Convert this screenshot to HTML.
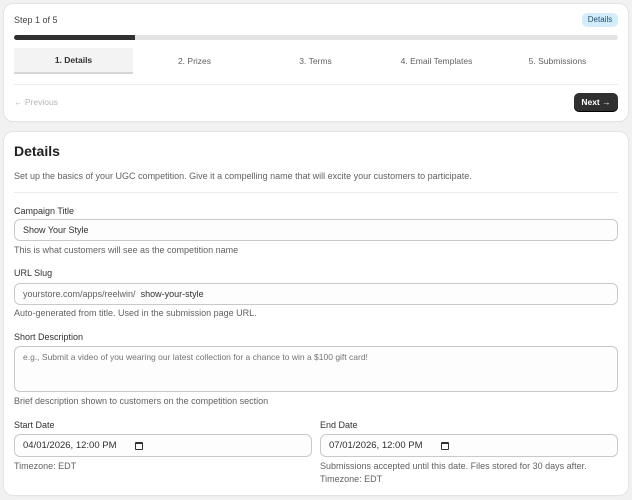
<!DOCTYPE html>
<html><head><style>
*{box-sizing:border-box;margin:0;padding:0}
body{width:632px;height:500px;background:#f1f1f1;font-family:"Liberation Sans",sans-serif;color:#303030;position:relative;overflow:hidden}
.card{position:absolute;left:4px;width:624px;background:#fff;border-radius:9px;box-shadow:0 0 0 1px #e3e3e3,0 1px 1px rgba(0,0,0,.08)}
.a{position:absolute;white-space:nowrap}
.s{font-size:9px;color:#616161}
.l{font-size:9px;color:#303030}
.inp{position:absolute;border:1px solid #c9c9c9;border-radius:6px;background:#fdfdfd;font-size:9px;color:#303030;padding-left:8px;display:flex;align-items:center}
.tab{position:absolute;top:44px;height:26px;width:119px;font-size:8.5px;color:#616161;display:flex;align-items:center;justify-content:center}
</style></head><body>
<div class="card" style="top:4px;height:117px">
  <div class="a s" style="left:10px;top:11px;color:#444">Step 1 of 5</div>
  <div class="a" style="left:578px;top:9px;width:36px;height:14px;background:#d3ecfa;border-radius:5px;font-size:8px;color:#1f4f6e;text-align:center;line-height:14px">Details</div>
  <div class="a" style="left:10px;top:31px;width:604px;height:5px;background:#e3e3e3;border-radius:3px"></div>
  <div class="a" style="left:10px;top:31px;width:121px;height:5px;background:#303030;border-radius:3px 0 0 3px"></div>
  <div class="tab" style="left:10px;background:#f3f3f3;border-bottom:2px solid #d6d6d6;color:#303030;font-weight:bold">1. Details</div>
  <div class="tab" style="left:131px">2. Prizes</div>
  <div class="tab" style="left:252px">3. Terms</div>
  <div class="tab" style="left:373px">4. Email Templates</div>
  <div class="tab" style="left:494px">5. Submissions</div>
  <div class="a" style="left:10px;top:80px;width:604px;height:1px;background:#ebebeb"></div>
  <div class="a" style="left:10px;top:93px;font-size:8.5px;color:#b5b5b5">← Previous</div>
  <div class="a" style="left:570px;top:89px;width:44px;height:18px;background:#303030;border-radius:5px;color:#fff;font-size:8.5px;font-weight:bold;text-align:center;line-height:18px;box-shadow:0 1px 0 #000">Next →</div>
</div>
<div class="card" style="top:132px;height:363px">
  <div class="a" style="left:10px;top:11px;font-size:14px;font-weight:bold;color:#202020">Details</div>
  <div class="a s" style="left:10px;top:39px">Set up the basics of your UGC competition. Give it a compelling name that will excite your customers to participate.</div>
  <div class="a" style="left:10px;top:60px;width:604px;height:1px;background:#ebebeb"></div>
  <div class="a l" style="left:10px;top:74px">Campaign Title</div>
  <div class="inp" style="left:10px;top:87px;width:604px;height:22px">Show Your Style</div>
  <div class="a s" style="left:10px;top:113px">This is what customers will see as the competition name</div>
  <div class="a l" style="left:10px;top:136px">URL Slug</div>
  <div class="inp" style="left:10px;top:151px;width:604px;height:22px"><span style="color:#616161">yourstore.com/apps/reelwin/</span>&nbsp;&nbsp;show-your-style</div>
  <div class="a s" style="left:10px;top:176px">Auto-generated from title. Used in the submission page URL.</div>
  <div class="a l" style="left:10px;top:200px">Short Description</div>
  <div class="inp" style="left:10px;top:214px;width:604px;height:46px;align-items:flex-start;padding-top:5px;color:#757575;font-size:8.5px">e.g., Submit a video of you wearing our latest collection for a chance to win a $100 gift card!</div>
  <div class="a s" style="left:10px;top:264px">Brief description shown to customers on the competition section</div>
  <div class="a l" style="left:10px;top:288px">Start Date</div>
  <div class="inp" style="left:10px;top:302px;width:298px;height:23px;font-size:9.5px">04/01/2026, 12:00 PM<span style="margin-left:18px;display:inline-block;width:8px;height:8px;border:1.5px solid #303030;border-top-width:2.5px;border-radius:1px"></span></div>
  <div class="a s" style="left:10px;top:329px">Timezone: EDT</div>
  <div class="a l" style="left:316px;top:288px">End Date</div>
  <div class="inp" style="left:316px;top:302px;width:298px;height:23px;font-size:9.5px">07/01/2026, 12:00 PM<span style="margin-left:18px;display:inline-block;width:8px;height:8px;border:1.5px solid #303030;border-top-width:2.5px;border-radius:1px"></span></div>
  <div class="a s" style="left:316px;top:329px">Submissions accepted until this date. Files stored for 30 days after.</div>
  <div class="a s" style="left:316px;top:342px">Timezone: EDT</div>
</div>
</body></html>
